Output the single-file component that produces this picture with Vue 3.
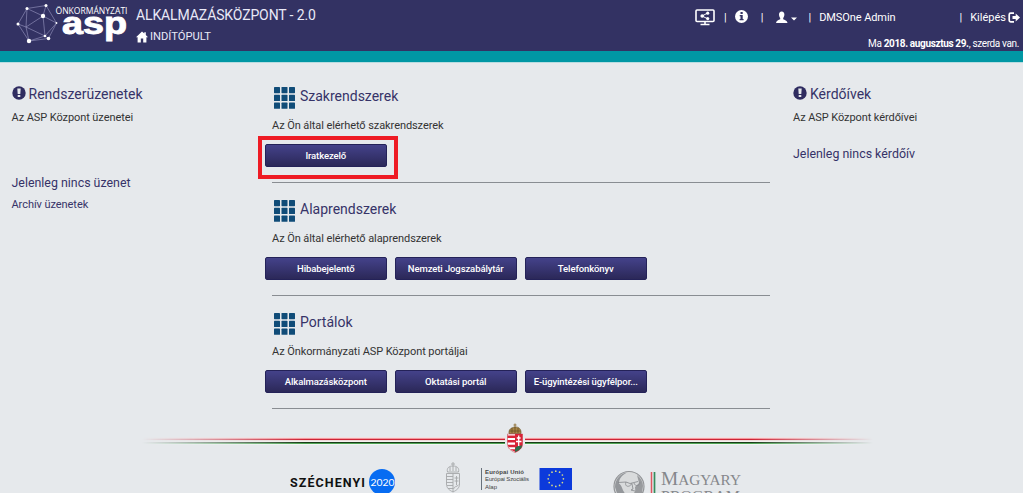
<template>
  <div class="page">
    <header class="top-bar">
      <svg class="asp-logo" viewBox="0 0 130 51" width="130" height="51">
        <g stroke="#9a99c2" stroke-width="0.600" fill="none">
          <path d="M27 8.500 46 5.500 56.500 23 48.500 38.500 29 41 18 24Z" />
          <path d="M27 8.500 43 16 46 5.500M43 16 26 27 18 24M43 16 45 36 26 27 27 8.500M26 27 29 41 45 36 56.500 23 43 16M45 36 48.500 38.500" />
        </g>
        <g fill="#fff">
          <circle cx="27" cy="8.500" r="1.500" />
          <circle cx="46" cy="5.500" r="1.500" />
          <circle cx="43" cy="16" r="2.200" />
          <circle cx="18" cy="24" r="1.500" />
          <circle cx="29" cy="41" r="2.200" />
          <circle cx="45" cy="36" r="1.300" />
          <circle cx="48.500" cy="38.500" r="1.800" />
          <circle cx="56.500" cy="23" r="0.900" />
        </g>
        <text class="logo-small" x="55.500" y="14" textLength="72" lengthAdjust="spacingAndGlyphs">ÖNKORMÁNYZATI</text>
        <text class="logo-big" x="62" y="34" textLength="65" lengthAdjust="spacingAndGlyphs">asp</text>
      </svg>
      <div class="titles">
        <div class="app-title">ALKALMAZÁSKÖZPONT - 2.0</div>
        <div class="home-link">
          <svg viewBox="0 0 12 12" width="12" height="12"><path fill="#fff" d="M6 .4 0 6.300h1.600V11.500h3.200V7.600h2.400v3.900h3.200V6.300H12L9.800 4.100V1.200H8.300v1.400Z" /></svg>
          <span>INDÍTÓPULT</span>
        </div>
      </div>
      <div class="account">
        <nav class="user-menu">
          <svg class="monitor" viewBox="0 0 20 17" width="20" height="17">
            <rect x="1" y="1" width="18" height="11.500" rx="1" fill="none" stroke="#fff" stroke-width="1.600" />
            <path d="M10 12.500V15M5.500 15.500h9" stroke="#fff" stroke-width="1.600" />
            <path d="M12.500 4 7.200 7l5.300 2.800" fill="none" stroke="#fff" />
            <g fill="#fff"><circle cx="12.700" cy="4.200" r="1.600" /><circle cx="7.200" cy="7" r="1.800" /><circle cx="12.700" cy="9.600" r="1.600" /></g>
          </svg>
          <span class="bar bar-1">|</span>
          <svg class="info" viewBox="0 0 13 13" width="13" height="13">
            <circle cx="6.500" cy="6.500" r="6.500" fill="#fff" />
            <path fill="#333263" d="M5.500 2h2.200v1.900H5.500ZM4.700 5h3v4h.9v1.300H4.600V9h.9V6.300h-.8Z" />
          </svg>
          <span class="bar bar-2">|</span>
          <svg class="person" viewBox="0 0 21 13" width="21" height="13">
            <path fill="#fff" d="M5.700.5C7.500.5 8.500 1.900 8.400 3.700 8.300 5.300 7.600 6.300 7.200 7v1.200c1.500.8 4.100 1.300 4.300 3.800H0c.2-2.500 2.700-3 4.200-3.800V7C3.700 6.300 3.100 5.200 3 3.700 2.900 1.900 3.900.5 5.700.5ZM15 6.500h6L18 9.500Z" />
          </svg>
          <span class="bar bar-3">|</span>
          <span class="user-name">DMSOne Admin</span>
          <span class="bar bar-4">|</span>
          <span class="logout">Kilépés</span>
          <svg class="exit" viewBox="0 0 12 11" width="12" height="11">
            <path d="M6 1.200H2.700Q1.200 1.200 1.200 2.700v5.600q0 1.500 1.500 1.500H6" fill="none" stroke="#fff" stroke-width="1.700" />
            <path fill="#fff" d="M4.500 4H7.700V1.500L12 5.500 7.700 9.500V7H4.500Z" />
          </svg>
        </nav>
        <div class="today">Ma <b>2018. augusztus 29.</b>, szerda van.</div>
      </div>
    </header>
    <div class="teal-line"></div>

    <main class="columns">
      <aside class="side left">
        <h2><svg class="alert" viewBox="0 0 14 14"><circle cx="7" cy="7" r="6.700" fill="#2f2c60" /><path fill="#e6e9ec" d="M5.300 2.500h3.400L8.300 8H5.700ZM5.700 9h2.600v2.100H5.700Z" /></svg><span class="side-title">Rendszerüzenetek</span></h2>
        <p class="side-desc">Az ASP Központ üzenetei</p>
        <p class="side-state">Jelenleg nincs üzenet</p>
        <p class="archive">Archív üzenetek</p>
      </aside>

      <div class="systems">
        <section v-for="group in groups" :key="group.title" class="group">
          <h2>
            <svg class="grid-icon" viewBox="0 0 21 22">
              <rect v-for="n in 9" :key="n" :x="((n - 1) % 3) * 7.5" :y="Math.floor((n - 1) / 3) * 7.8" width="6" height="6.200" rx="0.600" fill="#104c78" />
            </svg>
            <span>{{ group.title }}</span>
          </h2>
          <p>{{ group.description }}</p>
          <div class="buttons">
            <div v-for="item in group.items" :key="item" :class="['button-wrap', { marked: item === 'Iratkezelő' }]">
              <button>{{ item }}</button>
            </div>
          </div>
        </section>
      </div>

      <aside class="side right">
        <h2><svg class="alert" viewBox="0 0 14 14"><circle cx="7" cy="7" r="6.700" fill="#2f2c60" /><path fill="#e6e9ec" d="M5.300 2.500h3.400L8.300 8H5.700ZM5.700 9h2.600v2.100H5.700Z" /></svg><span class="side-title">Kérdőívek</span></h2>
        <p class="side-desc">Az ASP Központ kérdőívei</p>
        <p class="side-state">Jelenleg nincs kérdőív</p>
      </aside>
    </main>

    <footer>
      <div class="ribbon">
        <div class="stripe fade-left"></div>
        <svg class="arms" viewBox="0 0 18 31" width="18" height="31">
          <path fill="#a88445" stroke="#665329" stroke-width="0.600" d="M3 10.500C2.500 6.500 5 4.500 9 4s6.500 2.500 6 6.500Z" />
          <path stroke="#92743d" d="M9 .5v4M7.500 2h3" />
          <path stroke="#5f4b21" stroke-width="0.700" fill="none" d="M6 5v5M9 4v6M12 5v5M3.500 8h11" />
          <path fill="#fff" stroke="#bb2430" stroke-width="0.500" d="M1.500 11h15v10c0 4-3 6.500-7.500 8.500-4.500-2-7.500-4.500-7.500-8.500Z" />
          <path fill="#d82336" d="M9 11h7.500v10c0 4-3 6.500-7.500 8.500ZM1.500 12.500H9V15H1.500ZM1.500 17H9v2.500H1.500ZM1.700 21.700H9v2.500H2.600ZM4 26.300h5v2.500Z" />
          <path fill="none" stroke="#fff" stroke-width="1.300" d="M12.700 12.500v11M10.800 15h3.800M10 18.500h5.500" />
          <path fill="#28714c" d="M9.200 29c-.5-4 .5-5.500 3.500-6 1.500 0 2.600-.4 3.400-1-.4 3.500-3.300 5.700-6.900 7Z" />
        </svg>
        <div class="stripe fade-right"></div>
      </div>
      <svg class="partners" viewBox="280 462 480 31" width="480" height="31">
        <text class="szechenyi" x="290" y="486.500" textLength="75">SZÉCHENYI</text>
        <circle cx="382" cy="482" r="13" fill="#076cf2" />
        <text class="year" x="370.500" y="486" textLength="24" lengthAdjust="spacingAndGlyphs">2020</text>
        <g fill="none" stroke="#a5a7a9" stroke-width="0.900">
          <path d="M453 462v4M451 464h4M447.500 472c-1-4 1.500-6 5.500-6s6.500 2 5.500 6ZM450 467v4M453 466v5M456 467v4M446.500 473.500h13V484c0 4-2.500 6-6.500 8-4-2-6.500-4-6.500-8ZM453 473.500V492M446.500 476.500h6.500M446.500 479.500h6.500M446.500 482.500h6.500M447 485.500h6M448 488.500h5M456.500 476v9M454.500 478h4M454.500 481h4M453.500 489c1-3 3-2 5-4" />
        </g>
        <path stroke="#69717b" d="M481.500 468v22" />
        <text class="eu bold" x="485" y="473.500" textLength="39">Európai Unió</text>
        <text class="eu" x="485" y="481" textLength="44">Európai Szociális</text>
        <text class="eu" x="485" y="489" textLength="12">Alap</text>
        <rect x="539.500" y="468" width="32.500" height="22" fill="#0c3adb" />
        <circle v-for="(star, i) in stars" :key="i" :cx="star.x" :cy="star.y" r="0.850" fill="#d9dd86" />
        <circle cx="629" cy="486.500" r="15" fill="#d9dbdc" stroke="#939598" stroke-width="1.200" />
        <path fill="#94979b" d="M615 487c0-8 6-14 12-14.500-6 3-8 7-8 11 3 2 3 6 6 10h-8Z" />
        <path fill="#999b9e" d="M637 475c4 3 6 7 6 11l-1 7h-8c2-2 1-4 1-6l4-4Z" />
        <path stroke="#85888b" stroke-width="0.800" fill="none" d="M618 482.500l8-.5 4 1.500 8-2M626 482c-2 5 4 6 6 1M634 483c1 4 6 3 6-1M632 484l1 5-2 1 4 1" />
        <path stroke="#de5660" stroke-width="1.500" d="M651.500 472v21" />
        <path stroke="#348d5d" stroke-width="1.700" d="M654.500 472v21" />
        <text class="magyary" x="661" y="485" textLength="80" lengthAdjust="spacingAndGlyphs"><tspan class="initial">M</tspan>AGYARY</text>
        <text class="magyary program" x="661" y="501" textLength="79" lengthAdjust="spacingAndGlyphs">PROGRAM</text>
      </svg>
    </footer>
  </div>
</template>

<script setup>
const groups = [
  {
    title: 'Szakrendszerek',
    description: 'Az Ön által elérhető szakrendszerek',
    items: ['Iratkezelő']
  },
  {
    title: 'Alaprendszerek',
    description: 'Az Ön által elérhető alaprendszerek',
    items: ['Hibabejelentő', 'Nemzeti Jogszabálytár', 'Telefonkönyv']
  },
  {
    title: 'Portálok',
    description: 'Az Önkormányzati ASP Központ portáljai',
    items: ['Alkalmazásközpont', 'Oktatási portál', 'E-ügyintézési ügyfélpor...']
  }
]

// Twelve stars around the centre of the flag
const stars = Array.from({ length: 12 }, (_, i) => ({
  x: 555.8 + Math.cos(i * Math.PI / 6) * 7.6,
  y: 478.8 + Math.sin(i * Math.PI / 6) * 7.6
}))
</script>

<style>
body {
  background: #e6e9ec;
  overflow: hidden;
}
</style>

<style scoped>
.page {
  width: 1023px;
  height: 493px;
  overflow: hidden;
  background: #e6e9ec;
  font-family: Roboto, sans-serif;
  color: #333;
}

h2,
p {
  margin: 0;
  font-weight: 400;
}

svg {
  display: block;
  flex: none;
}

.top-bar {
  display: flex;
  height: 51px;
  background: #333263;
  color: #fff;
}

.logo-small {
  font: 9.5px "Open Sans", sans-serif;
  fill: #fff;
}

.logo-big {
  font: bold 31px "Liberation Sans", sans-serif;
  fill: #fff;
  stroke: #fff;
  stroke-width: 0.9px;
}

.titles {
  padding: 6px 0 0 6px;
}

.app-title {
  font-size: 14px;
  line-height: 18px;
  letter-spacing: -0.12px;
  color: #e9e9f7;
}

.home-link {
  display: flex;
  align-items: center;
  gap: 2px;
  margin-top: 4px;
  font-size: 11.2px;
  line-height: 17px;
  color: #e9e9f7;
}

.account {
  margin-left: auto;
}

.user-menu {
  display: flex;
  align-items: center;
  height: 35px;
  font-size: 11px;
}

.monitor { margin-right: 9px; }
.bar-1 { margin-right: 8px; }
.info { margin: -3px 13px 0 0; }
.bar-2 { margin-right: 13px; }
.person { margin-right: 11px; }
.bar-3 { margin-right: 8px; }
.bar-4 { margin: 0 8px 0 64px; }
.user-name { letter-spacing: -0.08px; }
.exit { margin: 0 3px 0 2px; }

.today {
  padding-right: 4px;
  font-size: 10px;
  line-height: 18px;
  letter-spacing: -0.36px;
  text-align: right;
}

.teal-line {
  height: 11px;
  background: #0097a4;
  border-bottom: 1px solid #b9dce0;
}

.columns {
  display: flex;
  height: 356px;
}

.left {
  width: 252.5px;
  padding: 20px 0 0 11.5px;
}

.side h2 {
  display: flex;
  align-items: center;
  height: 22px;
  color: #363368;
}

.alert {
  width: 14px;
  height: 14px;
  margin: -2px 3px 0 0;
}

.side-title {
  font-size: 14px;
}

.side-desc {
  margin-top: 3px;
  font-size: 11px;
  line-height: 19px;
  letter-spacing: -0.08px;
}

.side-state {
  margin-top: 17px;
  font-size: 12.4px;
  line-height: 20px;
  color: #363368;
}

.left .side-state {
  margin-top: 46px;
}

.archive {
  margin-top: 2px;
  font-size: 11px;
  line-height: 20px;
  letter-spacing: -0.06px;
  color: #363368;
}

.systems {
  width: 506px;
  padding-top: 7px;
}

.group {
  height: 113px;
  margin-left: 8px;
  padding-top: 17px;
  border-bottom: 1px solid #898d92;
  box-sizing: border-box;
}

.group h2 {
  display: flex;
  height: 22px;
  padding-left: 2px;
  font-size: 14px;
  line-height: 18px;
  color: #363368;
}

.grid-icon {
  width: 21px;
  height: 22px;
  margin-right: 5px;
}

.group p {
  margin-top: 8px;
  font-size: 11px;
  line-height: 18px;
  letter-spacing: -0.08px;
}

.buttons {
  display: flex;
  gap: 7.5px;
  margin: 9px 0 0 -7.5px;
}

.button-wrap {
  position: relative;
}

button {
  display: block;
  width: 122.5px;
  height: 23px;
  padding: 0 4px 1px;
  border: 1px solid #242258;
  border-radius: 2px;
  background: linear-gradient(#44428a, #2b2858);
  color: #fff;
  font: 500 9.5px Roboto, sans-serif;
  letter-spacing: -0.1px;
  white-space: nowrap;
}

.marked::after {
  position: absolute;
  inset: -8px -11px -12px -7px;
  border: 4px solid #ee1b24;
  content: "";
}

.right {
  padding: 20px 0 0 23px;
}

.ribbon {
  display: flex;
  align-items: flex-start;
  height: 34px;
  padding: 4px 0 0 142px;
  box-sizing: border-box;
}

.stripe {
  width: 363px;
  height: 8px;
  margin-top: 14px;
  background: linear-gradient(#f6dedf 0 1px, #f0989f 1px 2px, #cf2233 2px 3px, #f0d9da 3px 4px, #f3f2ee 4px 5px, #183d18 5px 6px, #4fa354 6px 7px, #f1f5f2 7px);
}

.fade-left {
  mask-image: linear-gradient(90deg, transparent, #000 45%);
}

.fade-right {
  width: 348px;
  mask-image: linear-gradient(270deg, transparent, #000 35%);
}

.arms {
  margin: 0 1px;
}

.partners {
  margin: 9px 0 0 280px;
}

.szechenyi {
  font: bold 12.5px Roboto, sans-serif;
  fill: #111;
}

.year {
  font: 10px Lato, sans-serif;
  fill: #fff;
}

.eu {
  font: 6px "Liberation Sans", sans-serif;
  fill: #444;
}

.bold {
  font-weight: bold;
}

.magyary {
  font: 15px "Liberation Serif", serif;
  fill: #85878b;
}

.initial {
  font-size: 19px;
}

.program {
  font-size: 15px;
}
</style>
